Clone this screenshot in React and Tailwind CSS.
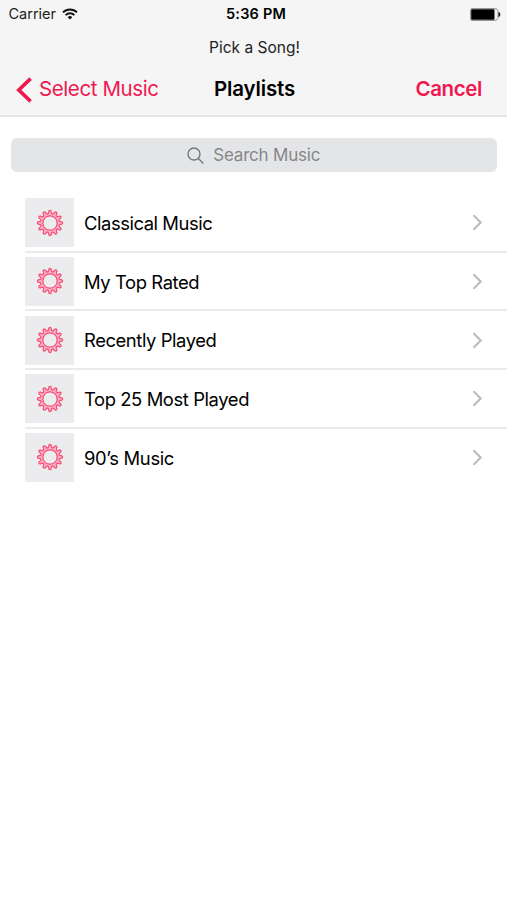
const playlists = [
  { name: 'Classical Music', tracking: 'tracking-[-0.44px]' },
  { name: 'My Top Rated', tracking: 'tracking-[-0.4px]' },
  { name: 'Recently Played', tracking: 'tracking-[-0.42px]' },
  { name: 'Top 25 Most Played', tracking: 'tracking-[-0.4px]' },
  { name: '90’s Music', tracking: 'tracking-[-0.34px]' },
];

const point = (radius, degrees) => {
  const a = (degrees * Math.PI) / 180;
  return `${(14 + radius * Math.sin(a)).toFixed(2)} ${(14 - radius * Math.cos(a)).toFixed(2)}`;
};

// Outline of a cog with twelve round-tipped teeth.
const cogPath =
  Array.from({ length: 12 }, (_, i) => {
    const c = i * 30;
    return `${i ? 'L' : 'M'}${point(9.5, c - 10.5)} L${point(12.1, c - 5)} Q${point(13.2, c)} ${point(12.1, c + 5)} L${point(9.5, c + 10.5)}`;
  }).join(' ') + ' Z';

function Cog() {
  return (
    <svg className="size-7" viewBox="0 0 28 28" fill="#f9b6c6" stroke="#f4507a" strokeWidth="1.25" strokeLinejoin="round">
      <path d={cogPath} />
      <circle cx="14" cy="14" r="7.2" fill="#ececef" />
    </svg>
  );
}

function Wifi() {
  return (
    <svg className="ml-[6px] h-3 w-4" viewBox="0 0 16 12" fill="none" stroke="#111" strokeWidth="1.9">
      <path d="M1 4.4a10 10 0 0 1 14 0" />
      <path d="M3.6 7.1a6.3 6.3 0 0 1 8.8 0" />
      <path d="M8 11.6 5.7 9.2a3.3 3.3 0 0 1 4.6 0z" fill="#111" stroke="none" />
    </svg>
  );
}

function Battery() {
  return (
    <svg className="h-[13px] w-[31px]" viewBox="0 0 31 13">
      <path d="M2.3.5h22.2c2.4 0 3.6 1.2 3.6 3v6c0 1.8-1.2 3-3.6 3H2.3a1.8 1.8 0 0 1-1.8-1.8V2.3A1.8 1.8 0 0 1 2.3.5z" fill="#f5f5f5" stroke="#8a8a8a" strokeWidth="0.9" />
      <rect x="1.2" y="1.2" width="23.3" height="10.6" rx="0.8" fill="#000" />
      <path d="M28.4 4c2.6.5 2.6 4.500 0 5z" fill="#222" />
    </svg>
  );
}

export default function App() {
  return (
    <div className="flex h-[900px] w-[507px] flex-col overflow-hidden bg-white font-['Inter',sans-serif] text-black">
      <header className="flex h-[117px] shrink-0 flex-col border-b-2 border-[#e4e4e5] bg-[#f5f5f5]">
        <div className="grid h-[27px] grid-cols-3 items-center pt-px pr-[6.5px] pl-[8.5px] text-[14.5px] leading-none">
          <div className="flex items-center text-[#222]">
            <span>Carrier</span>
            <Wifi />
          </div>
          <span className="pl-[3px] text-center font-semibold tracking-[0.2px]">5:36 PM</span>
          <div className="flex justify-end">
            <Battery />
          </div>
        </div>
        <p className="flex h-[41px] items-center justify-center pl-[2px] text-[15.5px] leading-none text-[#222]">Pick a Song!</p>
        <nav className="grid h-[43px] grid-cols-[minmax(0,1fr)_auto_minmax(0,1fr)] items-center text-[20.5px] leading-none">
          <button className="flex items-center pl-4 text-[#f01850]">
            <svg className="mr-[7px] h-[26px] w-4" viewBox="0 0 16 26" fill="none" stroke="#f01850" strokeWidth="3.6">
              <path d="M14.6 1.6 2.8 13l11.8 11.4" />
            </svg>
            <span className="whitespace-nowrap tracking-[-0.4px]">Select Music</span>
          </button>
          <h1 className="pl-[2px] font-semibold tracking-[-0.15px]">Playlists</h1>
          <button className="pr-[25px] text-right font-semibold tracking-[-0.4px] text-[#f01850]">Cancel</button>
        </nav>
      </header>
      <main className="pt-[21px]">
        <div className="mr-[10px] ml-[10.5px] flex h-[34px] items-center justify-center rounded-[6px] bg-[#e4e5e7] text-[17px] leading-none text-[#858789]">
          <svg className="mr-[9px] size-[17px]" viewBox="0 0 17 17" fill="none" stroke="#77797b" strokeWidth="1.4">
            <circle cx="7" cy="7" r="6" />
            <path d="m11.4 11.4 5 5" />
          </svg>
          <span className="tracking-[-0.2px]">Search Music</span>
        </div>
        <ul className="mt-[22px] ml-[25px]">
          {playlists.map(({ name, tracking }) => (
            <li key={name} className="flex h-[58.65px] items-center border-b-2 border-[#eaeaec] pr-6 last:border-transparent">
              <div className="mt-px flex size-[49px] items-center justify-center bg-[#ececef]">
                <Cog />
              </div>
              <span className={`ml-[10px] flex-1 pt-[2px] text-[18.4px] leading-none ${tracking}`}>{name}</span>
              <svg className="mt-px h-[17px] w-[11px]" viewBox="0 0 11 17" fill="none" stroke="#bcbcc0" strokeWidth="2.1">
                <path d="m1.5 1.3 7.2 7.2-7.2 7.2" />
              </svg>
            </li>
          ))}
        </ul>
      </main>
    </div>
  );
}
